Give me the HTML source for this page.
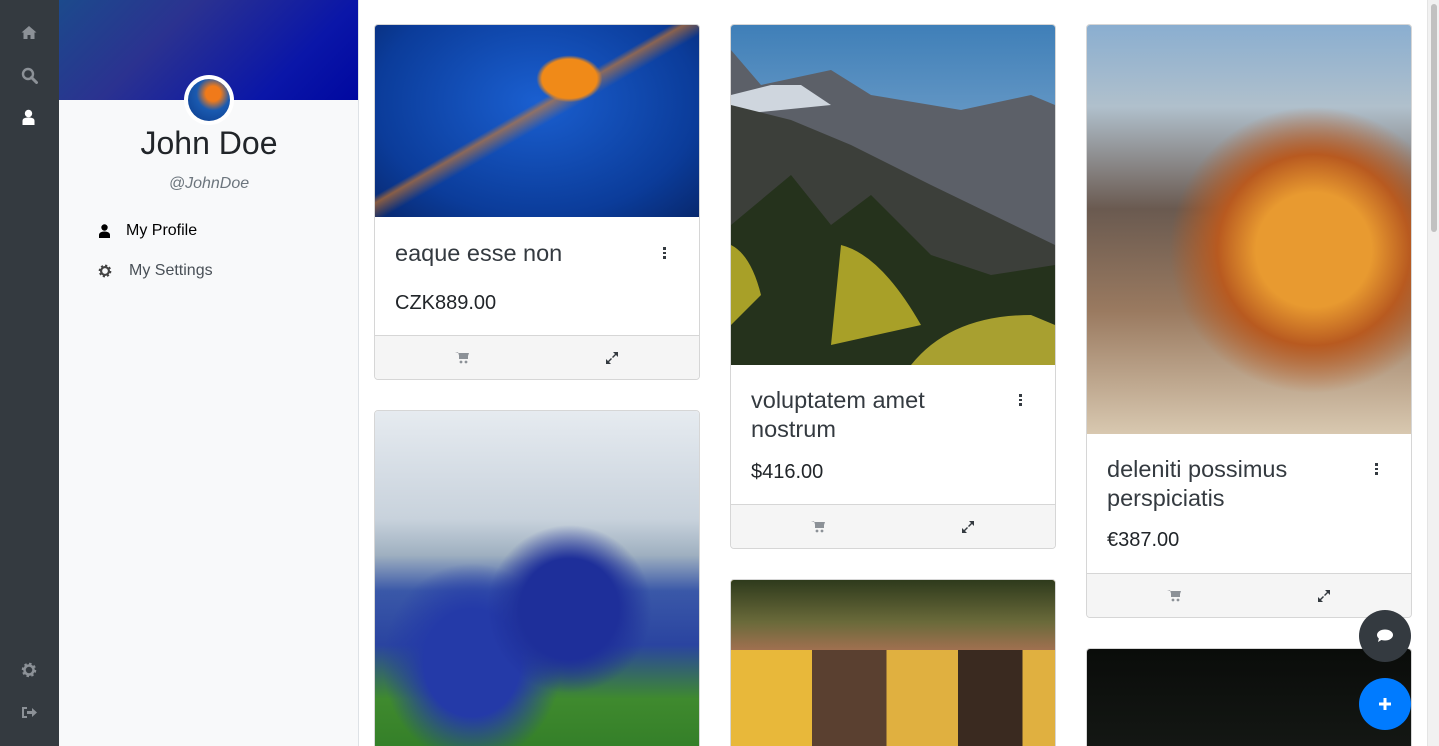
<!DOCTYPE html>
<html style="width:1439px;height:746px;overflow:hidden"><head><meta charset="utf-8"><style>
*{box-sizing:border-box;margin:0;padding:0}
body{width:1439px;height:746px;overflow:hidden;font-family:"Liberation Sans",sans-serif;background:#fff;position:relative}
.bar{position:absolute;left:0;top:0;width:59px;height:746px;background:#343a40}
.bar svg{position:absolute;left:21px}
.panel{position:absolute;left:59px;top:0;width:300px;height:746px;background:#f8f9fa;border-right:1px solid #dee2e6}
.hdr{height:100px;background:linear-gradient(135deg,#1c4a8c 0%,#2b3290 35%,#0a16a8 75%,#0008a0 100%)}
.av{position:absolute;left:125px;top:75px;width:50px;height:50px;border-radius:50%;background:#fff;padding:4px}
.av div{width:42px;height:42px;border-radius:50%;background:radial-gradient(circle at 60% 35%,#f07a1a 0 20%,#1a5ab0 45%,#0b3a8a 100%)}
.name{position:absolute;top:125px;width:300px;text-align:center;font-size:32px;color:#212529}
.user{position:absolute;top:175px;width:300px;text-align:center;font-size:16px;font-style:italic;color:#6c757d}
.mi{position:absolute;left:40px;font-size:16px}
.card{position:absolute;width:326px;border:1px solid #d6d6d6;border-radius:4px;overflow:hidden;background:#fff}
.img{width:100%;display:block}
.t{position:absolute;left:20px;font-size:23.5px;color:#343a40;line-height:29px}
.dots{position:absolute;right:33px;width:3px}
.dots i{display:block;width:2.5px;height:2.5px;background:#343a40;margin-bottom:2px}
.p{position:absolute;left:20px;font-size:20px;color:#212529}
.ft{position:absolute;left:0;width:100%;height:44px;background:#f5f5f5;border-top:1px solid #d6d6d6}
.ft svg{position:absolute;top:15px}
.fab{position:absolute;left:1359px;width:52px;height:52px;border-radius:50%}
.sb{position:absolute;left:1427px;top:0;width:12px;height:746px;background:#f1f1f1;border-left:1px solid #e4e4e4}
.sb div{position:absolute;left:3px;top:4px;width:6px;height:228px;border-radius:3px;background:#c1c1c1}
</style></head><body>
<div class="bar">
<svg style="top:25px" width="16" height="15" viewBox="0 0 16 15"><path d="M8 1L0.5 7.5h2V14h4v-4h3v4h4V7.5h2z" fill="#8c9197"/></svg>
<svg style="top:67px" width="17" height="17" viewBox="0 0 17 17"><circle cx="7" cy="7" r="5" stroke="#8c9197" stroke-width="2.4" fill="none"/><path d="M10.5 10.5L15.5 15.5" stroke="#8c9197" stroke-width="3" stroke-linecap="round"/></svg>
<svg style="top:109px" width="15" height="16" viewBox="0 0 15 16"><circle cx="7.5" cy="4.5" r="3.7" fill="#fff"/><path d="M1.5 16v-4c0-2.5 2-3.5 6-3.5s6 1 6 3.5v4z" fill="#fff"/></svg>
<svg style="top:662px" width="16" height="16" viewBox="0 0 16 16"><circle cx="8" cy="8" r="5.5" fill="none" stroke="#8c9197" stroke-width="3.5" stroke-dasharray="2.2 2.1"/><circle cx="8" cy="8" r="4.5" fill="none" stroke="#8c9197" stroke-width="2.5"/></svg>
<svg style="top:705px" width="16" height="15" viewBox="0 0 16 15"><path d="M1 2h5v2H3v7h3v2H1z M6 6h5V3l5 4.5-5 4.5V9H6z" fill="#8c9197"/></svg>
</div>
<div class="panel">
<div class="hdr"></div>
<div class="av"><div></div></div>
<div class="name">John Doe</div>
<div class="user">@JohnDoe</div>
<svg style="position:absolute;left:40px;top:224px" width="11" height="14" viewBox="0 0 11 14"><circle cx="5.5" cy="3.5" r="3.2" fill="#000"/><path d="M0 14v-3c0-2 2-3.5 5.5-3.5S11 9 11 11v3z" fill="#000"/></svg>
<div class="mi" style="left:67px;top:222px;color:#000">My Profile</div>
<svg style="position:absolute;left:39px;top:264px" width="14" height="14" viewBox="0 0 16 16"><circle cx="8" cy="8" r="5.5" fill="none" stroke="#444" stroke-width="3.5" stroke-dasharray="2.2 2.1"/><circle cx="8" cy="8" r="4.5" fill="none" stroke="#444" stroke-width="2.5"/></svg>
<div class="mi" style="left:70px;top:262px;color:#495057">My Settings</div>
</div>

<!-- col1 -->
<div class="card" style="left:374px;top:24px;height:356px">
<div class="img" style="height:192px;background:radial-gradient(ellipse at 60% 28%,#f08a18 0 10%,transparent 12%),linear-gradient(150deg,transparent 45%,rgba(240,130,20,.55) 47%,transparent 52%),radial-gradient(ellipse at 50% 40%,#1a5fd0,#0b3c9a 70%,#08286e)"></div>
<div class="t" style="top:214px">eaque esse non</div>
<div class="dots" style="top:222px"><i></i><i></i><i></i></div>
<div class="p" style="top:267px">CZK889.00</div>
<div class="ft" style="top:310px">
<svg style="left:80px" width="14" height="13" viewBox="0 0 14 13"><path d="M0 1h3l2 7h7l2-6H4" fill="#8c9197"/><rect x="4" y="2" width="9" height="6" fill="#8c9197"/><circle cx="6" cy="11" r="1.4" fill="#8c9197"/><circle cx="11" cy="11" r="1.4" fill="#8c9197"/></svg>
<svg style="left:230px" width="14" height="14" viewBox="0 0 14 14"><path d="M8 1h5v5l-2-2-3 3-1-1 3-3z M6 13H1V8l2 2 3-3 1 1-3 3z" fill="#343a40"/></svg>
</div></div>
<div class="card" style="left:374px;top:410px;height:360px">
<div class="img" style="height:360px;background:radial-gradient(ellipse at 60% 55%,#1e2f9a 0 18%,transparent 30%),radial-gradient(ellipse at 30% 70%,#243aa8 0 15%,transparent 28%),linear-gradient(180deg,#e6ebf0 0%,#c8d2dc 30%,#9fb0c0 40%,#3a58a8 50%,#2a44a0 65%,#3f8a2e 80%,#2f7a26 100%)"></div>
</div>

<!-- col2 -->
<div class="card" style="left:730px;top:24px;height:525px">
<svg class="img" width="324" height="340" viewBox="0 0 324 340">
<defs><linearGradient id="sky" x1="0" y1="0" x2="0" y2="1"><stop offset="0" stop-color="#3f7fb8"/><stop offset="1" stop-color="#c8d8e6"/></linearGradient></defs>
<rect width="324" height="340" fill="url(#sky)"/>
<path d="M0 25L30 60 100 45 140 70 230 85 300 70 324 80V340H0z" fill="#5c6068"/>
<path d="M0 70L40 60 70 60 100 80 0 90z" fill="#cfd6de"/>
<path d="M0 80L60 95 120 120 200 160 324 220V340H0z" fill="#3c3f3a"/>
<path d="M0 200L60 150 100 200 140 170 200 230 260 250 324 240V340H0z" fill="#25321c"/>
<path d="M0 220Q20 230 30 270L0 300z M110 220Q150 230 190 300L100 320z" fill="#a8a028"/>
<path d="M180 340Q220 290 300 290L324 300V340z" fill="#a8a030"/>
</svg>
<div class="t" style="top:361px">voluptatem amet<br>nostrum</div>
<div class="dots" style="top:369px"><i></i><i></i><i></i></div>
<div class="p" style="top:436px">$416.00</div>
<div class="ft" style="top:479px">
<svg style="left:80px" width="14" height="13" viewBox="0 0 14 13"><path d="M0 1h3l2 7h7l2-6H4" fill="#8c9197"/><rect x="4" y="2" width="9" height="6" fill="#8c9197"/><circle cx="6" cy="11" r="1.4" fill="#8c9197"/><circle cx="11" cy="11" r="1.4" fill="#8c9197"/></svg>
<svg style="left:230px" width="14" height="14" viewBox="0 0 14 14"><path d="M8 1h5v5l-2-2-3 3-1-1 3-3z M6 13H1V8l2 2 3-3 1 1-3 3z" fill="#343a40"/></svg>
</div></div>
<div class="card" style="left:730px;top:579px;height:200px">
<div class="img" style="height:200px;background:linear-gradient(90deg,#e8b83a 0 25%,#5a4030 25% 48%,#e0b040 48% 70%,#3a2a20 70% 90%,#e0b040 90%)"></div>
<div style="position:absolute;left:0;top:0;width:100%;height:70px;background:linear-gradient(180deg,#2e3a1c,#6a6a3a 60%,#a07050)"></div>
</div>

<!-- col3 -->
<div class="card" style="left:1086px;top:24px;height:594px">
<div class="img" style="height:409px;background:radial-gradient(ellipse at 70% 55%,#e89a30 0 18%,#b85a20 30%,transparent 45%),linear-gradient(180deg,#8aaed0 0%,#b0c0cc 20%,#6a5a50 45%,#9a7a60 70%,#d8c8b0 100%)"></div>
<div class="t" style="top:430px">deleniti possimus<br>perspiciatis</div>
<div class="dots" style="top:438px"><i></i><i></i><i></i></div>
<div class="p" style="top:504px">€387.00</div>
<div class="ft" style="top:548px">
<svg style="left:80px" width="14" height="13" viewBox="0 0 14 13"><path d="M0 1h3l2 7h7l2-6H4" fill="#8c9197"/><rect x="4" y="2" width="9" height="6" fill="#8c9197"/><circle cx="6" cy="11" r="1.4" fill="#8c9197"/><circle cx="11" cy="11" r="1.4" fill="#8c9197"/></svg>
<svg style="left:230px" width="14" height="14" viewBox="0 0 14 14"><path d="M8 1h5v5l-2-2-3 3-1-1 3-3z M6 13H1V8l2 2 3-3 1 1-3 3z" fill="#343a40"/></svg>
</div></div>
<div class="card" style="left:1086px;top:648px;height:120px">
<div class="img" style="height:120px;background:linear-gradient(180deg,#0a0c0a,#161a16)"></div>
</div>

<div class="fab" style="top:610px;background:#343a40"><svg style="position:absolute;left:17px;top:18px" width="18" height="16" viewBox="0 0 18 16"><ellipse cx="9" cy="7" rx="8" ry="5.5" fill="#fff"/><path d="M3 10L2 14l5-3z" fill="#fff"/></svg></div>
<div class="fab" style="top:678px;background:#007bff"><svg style="position:absolute;left:20px;top:20px" width="12" height="12" viewBox="0 0 12 12"><path d="M4.5 0h3v4.5H12v3H7.5V12h-3V7.5H0v-3h4.5z" fill="#fff"/></svg></div>
<div class="sb"><div></div></div>
</body></html>
